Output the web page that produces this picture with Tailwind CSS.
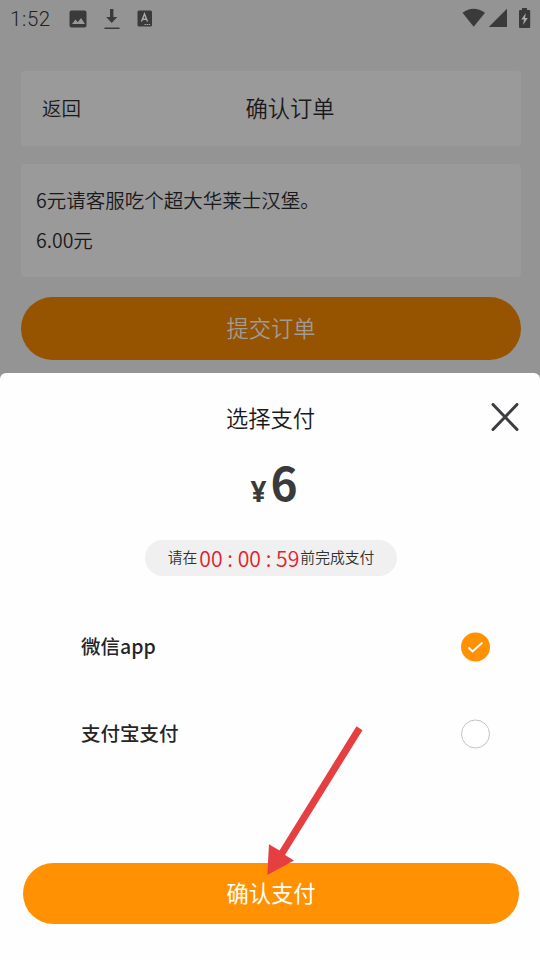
<!DOCTYPE html>
<html lang="zh-CN">
<head>
<meta charset="utf-8">
<title>确认订单</title>
<script src="https://cdn.jsdelivr.net/npm/@tailwindcss/browser@4"></script>
</head>
<body class="w-[540px] h-[960px] overflow-hidden bg-[#949494] font-['Noto_Sans_CJK_SC',sans-serif] text-[#19191b]">
<div class="relative flex h-[960px] flex-col">
  <header class="flex h-[37px] shrink-0 items-center justify-between pl-[10px] pr-[9px] text-[#3a3a3a]">
    <div class="flex items-center">
      <span class="w-[59px] pt-[1px] font-[Roboto,sans-serif] text-[20.5px] leading-[36px] font-[350] tracking-[0.6px] text-[#222]">1:52</span>
      <svg class="h-[18px] w-[18px]" viewBox="0 0 18 18"><rect x=".5" y=".5" width="17" height="17" rx="2" fill="#3a3a3a"/><path d="M3 14l3.5-4.5 2.3 2.8L12 8l4 6z" fill="#999"/></svg>
      <svg class="ml-[17px] h-[22px] w-[16px]" viewBox="0 0 16 22"><path d="M6 1h3.4v8h3.8l-5.5 6-5.5-6H6zM.5 19.4h15v1.5H.5z" fill="#3a3a3a"/></svg>
      <svg class="ml-[17px] h-[17px] w-[16px]" viewBox="0 0 16 17"><rect x=".5" y=".5" width="14.5" height="16" rx="1.5" fill="#3a3a3a"/><path d="M4.5 11.5L7.5 4l3 7.5M5.5 9.3h4" fill="none" stroke="#aaa" stroke-width="1.4"/><path d="M7.5 14.5h6" stroke="#aaa" stroke-width="1" stroke-dasharray="1.4 .7"/></svg>
    </div>
    <div class="flex items-center pb-[2px]">
      <svg class="h-[20px] w-[24px]" viewBox="0 0 24 20"><path d="M1.5 4.7Q12.5-3.2 24 4.7L12.7 18.8z" fill="#3a3a3a"/></svg>
      <svg class="ml-[3px] h-[20px] w-[19px]" viewBox="0 0 19 20"><path d="M19 .8V19H.8z" fill="#3a3a3a"/></svg>
      <svg class="ml-[11px] h-[22px] w-[13px]" viewBox="0 0 13 22"><path d="M4 1h5v2h2.2q1 0 1 1v16q0 1-1 1H2q-1 0-1-1V4q0-1 1-1h2z" fill="#3a3a3a"/><path d="M7.8 6L3.3 12.5H6L5 18l4.8-7.1H7z" fill="#aaa"/></svg>
    </div>
  </header>
  <main class="flex flex-col pl-[21px] pr-[19px] pt-[34px]">
    <div class="grid h-[75px] grid-cols-[1fr_auto_1fr] items-center rounded-[3px] bg-[#9a9a9a] px-[21px] pb-[1px]">
      <span class="text-[19.5px] font-[350]">返回</span>
      <h1 class="translate-x-[19px] text-[22.3px] font-[350]">确认订单</h1>
      <span></span>
    </div>
    <div class="mt-[18px] flex h-[113px] flex-col rounded-[4px] bg-[#9a9a9a] px-[15px] pt-[16px] text-[19.5px] leading-[40px] font-[350]">
      <p>6元请客服吃个超大华莱士汉堡。</p>
      <p>6.00元</p>
    </div>
    <button class="mt-[20px] h-[63px] rounded-full bg-[#965300] pb-[1px] text-[22.3px] font-[350] text-[#a19b96]">提交订单</button>
  </main>
  <section class="mt-[13px] flex grow flex-col rounded-t-[6px] bg-[#fefefe]">
    <div class="grid h-[90px] grid-cols-[1fr_auto_1fr] items-center pl-[21px] pr-[20px]">
      <span></span>
      <h2 class="text-[22.3px] font-[350]">选择支付</h2>
      <svg class="h-[30px] w-[30px] justify-self-end" viewBox="0 0 30 30"><path d="M3 1.5l24 25M27 1.5L3 26.5" fill="none" stroke="#3c3d40" stroke-width="3" stroke-linecap="round"/></svg>
    </div>
    <div class="-mt-[7px] mb-[7px] flex h-[50px] items-baseline justify-center gap-[3px] pl-[7px] text-[#3a3a3c]">
      <span class="w-[18px] text-center font-['Noto_Sans',sans-serif] text-[28px] leading-[50px] font-bold"><span class="relative top-px">¥</span></span><span class="text-[46px] leading-[50px] font-bold">6</span>
    </div>
    <div class="mt-[27px] ml-[145px] flex h-[36px] w-[252px] items-center justify-center rounded-full bg-[#f0f0f0] pb-[1px] text-[14.8px] font-[350] text-[#303030]">
      <span>请在</span><span class="mr-[1px] ml-[2px] text-[21.2px] text-[#e4222d]">00 : 00 : 59</span><span>前完成支付</span>
    </div>
    <div class="mt-[27px] flex flex-col pr-[49px] pl-[81px] text-[19.5px] font-medium text-[#252527]">
      <div class="flex h-[87px] items-center justify-between">
        <span class="-mt-[2px]">微信app</span>
        <svg class="h-[30px] w-[30px]" viewBox="0 0 30 30"><circle cx="14.5" cy="15" r="14.5" fill="#ff9102"/><path d="M7.5 15.5l4 4L21.5 10.5" fill="none" stroke="#fff" stroke-width="1.9"/></svg>
      </div>
      <div class="flex h-[87px] items-center justify-between">
        <span class="-mt-[2px]">支付宝支付</span>
        <svg class="h-[30px] w-[30px]" viewBox="0 0 30 30"><circle cx="14.5" cy="15" r="14" fill="#fff" stroke="#c4c4c4"/></svg>
      </div>
    </div>
    <button class="mx-auto mt-[86px] h-[61px] w-[496px] translate-x-[1px] rounded-full bg-[#ff9102] pb-[2px] text-[22.3px] text-white">确认支付</button>
  </section>
  <svg class="pointer-events-none absolute top-[720px] left-[260px] h-[160px] w-[110px]" viewBox="260 720 110 160"><path d="M356.5 726.2L362.5 730.2 285 855 294 860.5 267.3 875 269 844.3 279.5 850.5z" fill="#e53f41"/></svg>
</div>
</body>
</html>
